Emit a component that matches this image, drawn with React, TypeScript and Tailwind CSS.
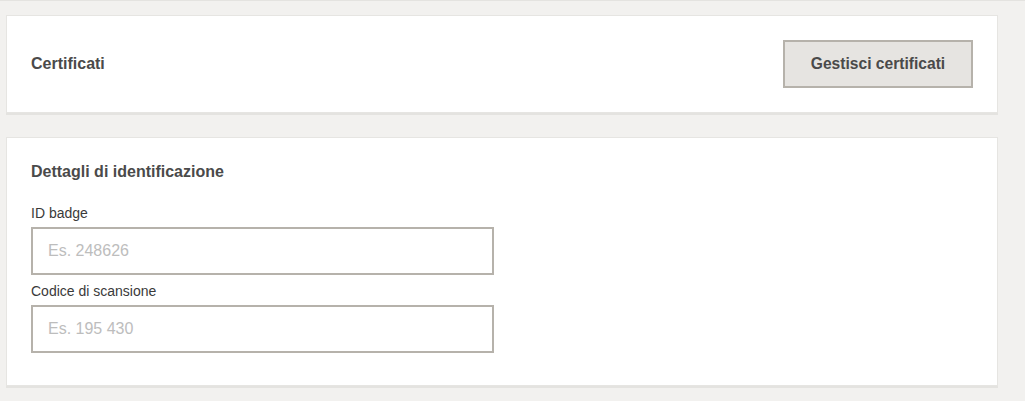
const fields = [
  { label: "ID badge", placeholder: "Es. 248626" },
  { label: "Codice di scansione", placeholder: "Es. 195 430" },
];

export default function App() {
  return (
    <div
      className="min-h-[401px] bg-[#f2f1ef] border-t border-[#e4e3e0] pt-[14px] pl-[6px] pr-[27px]"
      style={{ fontFamily: '"Liberation Sans", Arial, sans-serif' }}
    >
      {/* Certificati */}
      <section className="bg-white border border-[#e6e5e2] shadow-[0_2px_0_#e4e3e0] px-6 py-6 flex items-center justify-between">
        <h2 className="text-[16px] font-bold text-[#4a4a4a]">Certificati</h2>
        <button className="h-[48px] w-[190px] bg-[#e6e4e1] border-2 border-[#b6b2ab] text-[15.6px] font-bold text-[#4a4a4a]">
          Gestisci certificati
        </button>
      </section>

      {/* Dettagli di identificazione */}
      <section className="mt-[24px] bg-white border border-[#e6e5e2] shadow-[0_2px_0_#e4e3e0] px-6 pt-6 pb-[32px]">
        <h2 className="text-[16px] leading-[20px] font-bold text-[#4a4a4a]">Dettagli di identificazione</h2>
        <div className="mt-[22px] flex flex-col">
          {fields.map((f, i) => (
            <div key={f.label} className={i > 0 ? "mt-[7px]" : ""}>
              <label className="block text-[14px] leading-[18px] text-[#3a3a3a] mb-[5px]">{f.label}</label>
              <input
                type="text"
                placeholder={f.placeholder}
                className="block w-[463px] h-[48px] border-2 border-[#b6b2ab] bg-white px-[15px] text-[16px] text-[#4a4a4a] placeholder:text-[#bdbdbd] outline-none"
              />
            </div>
          ))}
        </div>
      </section>
    </div>
  );
}
